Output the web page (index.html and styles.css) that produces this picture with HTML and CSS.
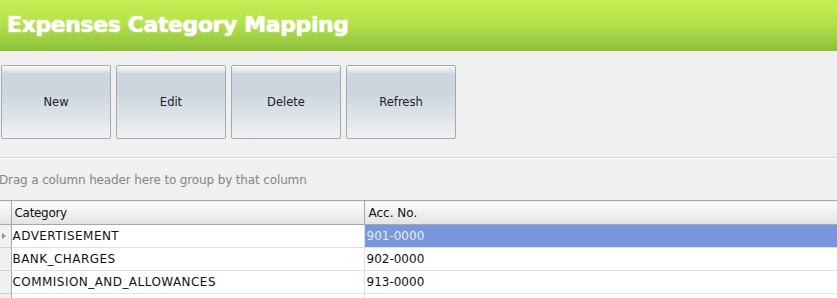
FILE: index.html
```html
<!DOCTYPE html>
<html>
<head>
<meta charset="utf-8">
<link rel="stylesheet" href="styles.css">
</head>
<body>
<div class="page">
  <header class="titlebar"><h1 class="title">Expenses Category Mapping</h1></header>
  <div class="toolbar">
    <button class="btn">New</button>
    <button class="btn">Edit</button>
    <button class="btn">Delete</button>
    <button class="btn">Refresh</button>
  </div>
  <div class="group-panel"><span class="group-hint">Drag a column header here to group by that column</span></div>
  <table class="grid">
    <colgroup>
      <col class="c-ind">
      <col class="c-cat">
      <col class="c-acc">
    </colgroup>
    <thead>
      <tr><th class="ind"></th><th class="h-cat">Category</th><th>Acc. No.</th></tr>
    </thead>
    <tbody>
      <tr><td class="ind"><span class="arrow"></span></td><td class="cat">ADVERTISEMENT</td><td class="sel">901-0000</td></tr>
      <tr><td class="ind"></td><td class="cat">BANK_CHARGES</td><td>902-0000</td></tr>
      <tr><td class="ind"></td><td class="cat">COMMISION_AND_ALLOWANCES</td><td>913-0000</td></tr>
      <tr><td class="ind"></td><td></td><td></td></tr>
    </tbody>
  </table>
</div>
</body>
</html>
```
FILE: styles.css
```css
html, body {
  margin: 0;
  padding: 0;
  background: #f0f0f0;
}
.page {
  width: 837px;
  height: 298px;
  overflow: hidden;
  font-family: "DejaVu Sans", Verdana, sans-serif;
  font-size: 12px;
  color: #1a1a1a;
}
.titlebar {
  height: 51px;
  background: linear-gradient(to bottom, #c4ef53 0%, #b4e24c 45%, #8ebf3b 100%);
  display: flex;
  align-items: center;
  padding-left: 7px;
}
.title {
  margin: 0 0 3px 0;
  font-family: "DejaVu Sans", Verdana, sans-serif;
  font-weight: bold;
  font-size: 22px;
  letter-spacing: -0.4px;
  color: #ffffff;
  text-shadow: 0 0 1px #f4ffd0, 0 0 2px rgba(250,255,220,0.7);
}
.toolbar {
  display: flex;
  gap: 5px;
  padding: 14px 0 0 1px;
  height: 107px;
  box-sizing: border-box;
  border-bottom: 1px solid #d2d2d2;
}
.btn {
  width: 110px;
  height: 74px;
  border: 1px solid #a6a9ad;
  border-radius: 2px;
  background: linear-gradient(to bottom, #f5f7f9 0%, #e6eaee 6%, #cdd6df 11%, #ccd5de 35%, #dae0e6 62%, #eff1f4 100%);
  font-family: "DejaVu Sans", Verdana, sans-serif;
  font-size: 11.5px;
  color: #222;
  padding: 0;
  box-shadow: inset 0 1px 0 #ffffff;
}
.group-panel {
  height: 42px;
  display: flex;
  align-items: center;
  border-top: 1px solid #ffffff;
  box-sizing: border-box;
}
.group-hint {
  margin-left: -1px;
  color: #858585;
  font-size: 12px;
  letter-spacing: -0.14px;
}
.grid {
  width: 837px;
  border-collapse: collapse;
  table-layout: fixed;
  border-top: 1px solid #a8a8a8;
}
.c-ind { width: 11px; }
.c-cat { width: 353px; }
.c-acc { width: 473px; }
.grid th {
  height: 23px;
  padding: 0 0 0 4px;
  text-align: left;
  font-weight: normal;
  font-size: 12px;
  color: #111;
  background: linear-gradient(to bottom, #fafafa 0%, #f0f0f0 50%, #e2e2e2 100%);
  border-left: 1px solid #a8a8a8;
  border-bottom: 1px solid #a8a8a8;
}
.grid th.h-cat { letter-spacing: -0.3px; padding-left: 3px; }
.grid th.ind { border-left: none; padding: 0; }
.grid td {
  height: 22px;
  padding: 0 0 0 2px;
  background: #ffffff;
  border-left: 1px solid #e0e0e0;
  border-bottom: 1px solid #e0e0e0;
  font-size: 12px;
  color: #111;
  white-space: nowrap;
}
.grid td.cat {
  letter-spacing: 0.45px;
  padding-left: 1px;
}
.grid td.ind {
  background: #f0f0f0;
  border-left: none;
  border-bottom: 1px solid #d0d0d0;
  border-right: 1px solid #a8a8a8;
  padding: 0;
}
.arrow {
  display: block;
  width: 0;
  height: 0;
  margin-left: 2px;
  border-top: 3.5px solid transparent;
  border-bottom: 3.5px solid transparent;
  border-left: 4px solid #8d92ab;
}
.grid td.sel {
  background: #7997dc;
  color: #e6ebf8;
}
```
